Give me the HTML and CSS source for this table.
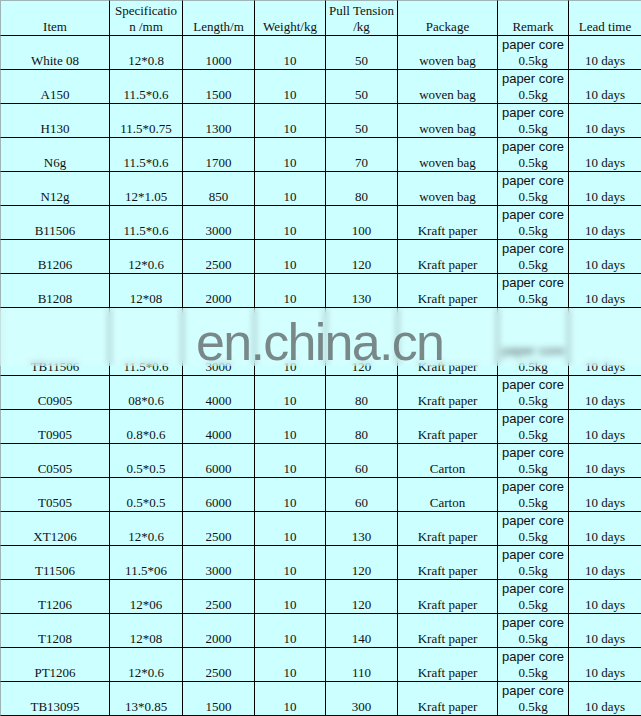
FILE: index.html
```html
<!DOCTYPE html>
<html>
<head>
<meta charset="utf-8">
<link rel="stylesheet" href="styles.css">
</head>
<body>
<div class="sheet">
  <div class="row head">
    <div class="c">Item</div>
    <div class="c">Specificatio<br>n /mm</div>
    <div class="c">Length/m</div>
    <div class="c">Weight/kg</div>
    <div class="c">Pull Tension<br>/kg</div>
    <div class="c">Package</div>
    <div class="c">Remark</div>
    <div class="c">Lead time</div>
  </div>
  <div class="row"><div class="c">White 08</div><div class="c">12*0.8</div><div class="c">1000</div><div class="c">10</div><div class="c">50</div><div class="c">woven bag</div><div class="c"><span class="sans">paper core</span><span>0.5kg</span></div><div class="c">10 days</div></div>
  <div class="row"><div class="c">A150</div><div class="c">11.5*0.6</div><div class="c">1500</div><div class="c">10</div><div class="c">50</div><div class="c">woven bag</div><div class="c"><span class="sans">paper core</span><span>0.5kg</span></div><div class="c">10 days</div></div>
  <div class="row"><div class="c">H130</div><div class="c">11.5*0.75</div><div class="c">1300</div><div class="c">10</div><div class="c">50</div><div class="c">woven bag</div><div class="c"><span class="sans">paper core</span><span>0.5kg</span></div><div class="c">10 days</div></div>
  <div class="row"><div class="c">N6g</div><div class="c">11.5*0.6</div><div class="c">1700</div><div class="c">10</div><div class="c">70</div><div class="c">woven bag</div><div class="c"><span class="sans">paper core</span><span>0.5kg</span></div><div class="c">10 days</div></div>
  <div class="row"><div class="c">N12g</div><div class="c">12*1.05</div><div class="c">850</div><div class="c">10</div><div class="c">80</div><div class="c">woven bag</div><div class="c"><span class="sans">paper core</span><span>0.5kg</span></div><div class="c">10 days</div></div>
  <div class="row"><div class="c">B11506</div><div class="c">11.5*0.6</div><div class="c">3000</div><div class="c">10</div><div class="c">100</div><div class="c">Kraft paper</div><div class="c"><span class="sans">paper core</span><span>0.5kg</span></div><div class="c">10 days</div></div>
  <div class="row"><div class="c">B1206</div><div class="c">12*0.6</div><div class="c">2500</div><div class="c">10</div><div class="c">120</div><div class="c">Kraft paper</div><div class="c"><span class="sans">paper core</span><span>0.5kg</span></div><div class="c">10 days</div></div>
  <div class="row"><div class="c">B1208</div><div class="c">12*08</div><div class="c">2000</div><div class="c">10</div><div class="c">130</div><div class="c">Kraft paper</div><div class="c"><span class="sans">paper core</span><span>0.5kg</span></div><div class="c">10 days</div></div>
  <div class="row tall"><div class="c">TB11506</div><div class="c">11.5*0.6</div><div class="c">3000</div><div class="c">10</div><div class="c">120</div><div class="c">Kraft paper</div><div class="c"><span class="sans">paper core</span><span>0.5kg</span></div><div class="c">10 days</div>
    <div class="blur"></div>
    <div class="mark">en.china.cn</div>
  </div>
  <div class="row"><div class="c">C0905</div><div class="c">08*0.6</div><div class="c">4000</div><div class="c">10</div><div class="c">80</div><div class="c">Kraft paper</div><div class="c"><span class="sans">paper core</span><span>0.5kg</span></div><div class="c">10 days</div></div>
  <div class="row"><div class="c">T0905</div><div class="c">0.8*0.6</div><div class="c">4000</div><div class="c">10</div><div class="c">80</div><div class="c">Kraft paper</div><div class="c"><span class="sans">paper core</span><span>0.5kg</span></div><div class="c">10 days</div></div>
  <div class="row"><div class="c">C0505</div><div class="c">0.5*0.5</div><div class="c">6000</div><div class="c">10</div><div class="c">60</div><div class="c">Carton</div><div class="c"><span class="sans">paper core</span><span>0.5kg</span></div><div class="c">10 days</div></div>
  <div class="row"><div class="c">T0505</div><div class="c">0.5*0.5</div><div class="c">6000</div><div class="c">10</div><div class="c">60</div><div class="c">Carton</div><div class="c"><span class="sans">paper core</span><span>0.5kg</span></div><div class="c">10 days</div></div>
  <div class="row"><div class="c">XT1206</div><div class="c">12*0.6</div><div class="c">2500</div><div class="c">10</div><div class="c">130</div><div class="c">Kraft paper</div><div class="c"><span class="sans">paper core</span><span>0.5kg</span></div><div class="c">10 days</div></div>
  <div class="row"><div class="c">T11506</div><div class="c">11.5*06</div><div class="c">3000</div><div class="c">10</div><div class="c">120</div><div class="c">Kraft paper</div><div class="c"><span class="sans">paper core</span><span>0.5kg</span></div><div class="c">10 days</div></div>
  <div class="row"><div class="c">T1206</div><div class="c">12*06</div><div class="c">2500</div><div class="c">10</div><div class="c">120</div><div class="c">Kraft paper</div><div class="c"><span class="sans">paper core</span><span>0.5kg</span></div><div class="c">10 days</div></div>
  <div class="row"><div class="c">T1208</div><div class="c">12*08</div><div class="c">2000</div><div class="c">10</div><div class="c">140</div><div class="c">Kraft paper</div><div class="c"><span class="sans">paper core</span><span>0.5kg</span></div><div class="c">10 days</div></div>
  <div class="row"><div class="c">PT1206</div><div class="c">12*0.6</div><div class="c">2500</div><div class="c">10</div><div class="c">110</div><div class="c">Kraft paper</div><div class="c"><span class="sans">paper core</span><span>0.5kg</span></div><div class="c">10 days</div></div>
  <div class="row"><div class="c">TB13095</div><div class="c">13*0.85</div><div class="c">1500</div><div class="c">10</div><div class="c">300</div><div class="c">Kraft paper</div><div class="c"><span class="sans">paper core</span><span>0.5kg</span></div><div class="c">10 days</div></div>
</div>
</body>
</html>
```
FILE: styles.css
```css
html, body {
  margin: 0;
  padding: 0;
  background: #ccffff;
}
.sheet {
  width: 641px;
  height: 716px;
  overflow: hidden;
  background: #ccffff;
  font-family: "Liberation Serif", "Times New Roman", serif;
  font-size: 13px;
  line-height: 16px;
  color: #111;
}
.row {
  display: grid;
  grid-template-columns: 110px 73px 72px 71px 72px 100px 71px 72px;
  height: 34px;
}
.row.head {
  height: 36px;
}
.row.tall {
  height: 68px;
  position: relative;
}
.c {
  box-sizing: border-box;
  border-right: 1px solid #000;
  border-bottom: 1px solid #000;
  display: flex;
  flex-direction: column;
  justify-content: flex-end;
  align-items: center;
  text-align: center;
  white-space: nowrap;
}
.c:first-child {
  border-left: 1px solid #9fb4b4;
}
.c:nth-child(8) {
  border-right: none;
}
.head .c {
  border-top: 1px solid #9fb4b4;
}
.sans {
  font-family: "Liberation Sans", Arial, sans-serif;
  font-size: 13px;
}
.blur {
  position: absolute;
  left: 0;
  top: 0;
  width: 641px;
  height: 58px;
  backdrop-filter: blur(3px);
  background: rgba(232, 255, 255, 0.3);
}
.mark {
  position: absolute;
  left: 196px;
  top: 8px;
  font-family: "Liberation Sans", Arial, sans-serif;
  font-size: 52px;
  line-height: 52px;
  letter-spacing: -1.7px;
  color: rgba(98, 108, 108, 0.8);
  white-space: nowrap;
}
```
